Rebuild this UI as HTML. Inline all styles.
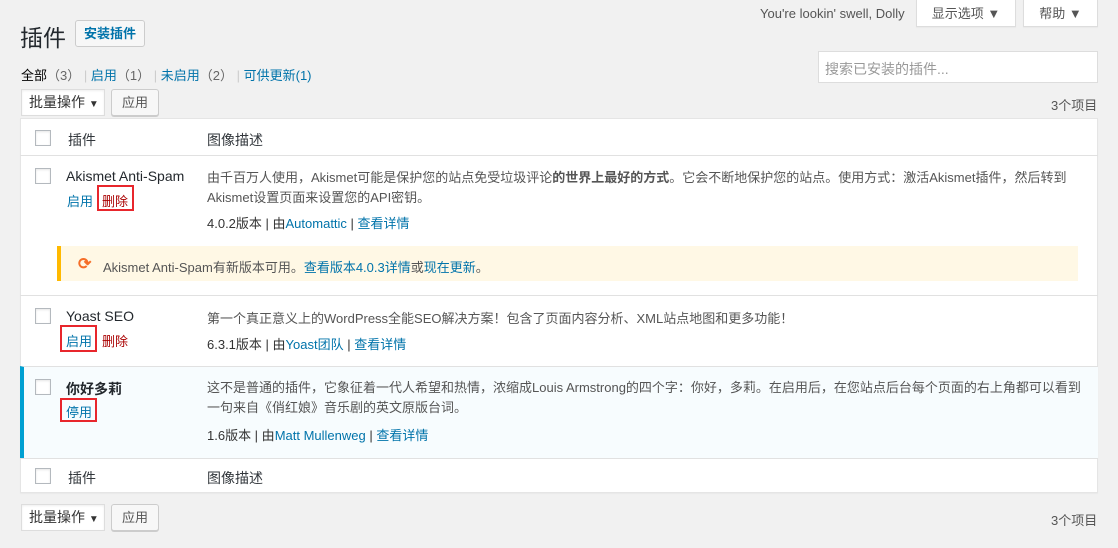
<!DOCTYPE html>
<html><head><meta charset="utf-8"><style>
*{box-sizing:border-box;margin:0;padding:0}
body{width:1118px;height:548px;background:#f1f1f1;font-family:"Liberation Sans","Noto Sans CJK SC",sans-serif;font-size:13px;color:#444;position:relative;overflow:hidden}
.a{position:absolute;white-space:nowrap}
a,.lk{color:#0073aa;text-decoration:none}
.btn{position:absolute;background:#f7f7f7;border:1px solid #ccc;border-radius:3px;box-shadow:0 1px 0 #ccc;color:#555;font-size:13px;text-align:center}
.sel{position:absolute;background:#fff;border:1px solid #ddd;box-shadow:inset 0 1px 2px rgba(0,0,0,.07);color:#333;font-size:14px;padding-left:7px}
.cb{position:absolute;width:16px;height:16px;border:1px solid #b4b9be;background:#fff;box-shadow:inset 0 1px 2px rgba(0,0,0,.1)}
.red{position:absolute;border:2px solid #e8262c}
.tab{position:absolute;background:#fff;border:1px solid #ddd;border-top:none;box-shadow:0 1px 1px rgba(0,0,0,.04);color:#555;font-size:13px;text-align:center}
.line{position:absolute;left:20px;width:1078px;height:1px;background:#e1e1e1}
.d{color:#555}
</style></head><body>
<div class="a" style="left:760px;top:6px;font-size:13px;color:#555">You're lookin' swell, Dolly</div>
<div class="tab" style="left:916px;top:0;width:100px;height:27px;line-height:27px">显示选项 &#9660;</div>
<div class="tab" style="left:1023px;top:0;width:75px;height:27px;line-height:27px">帮助 &#9660;</div>

<div class="a" style="left:20px;top:19px;font-size:23px;color:#23282d">插件</div>
<div class="btn" style="left:75px;top:20px;width:70px;height:27px;line-height:25px;color:#0073aa;font-weight:bold;background:#f7f7f7;box-shadow:none">安装插件</div>

<div class="a" style="left:21px;top:65px;font-size:13px;color:#666"><b style="color:#000;font-weight:normal">全部</b>（3） <span style="color:#ccc">|</span> <a>启用</a>（1） <span style="color:#ccc">|</span> <a>未启用</a>（2） <span style="color:#ccc">|</span> <a>可供更新(1)</a></div>

<div class="a" style="left:818px;top:51px;width:280px;height:32px;background:#fff;border:1px solid #ddd;padding:7px 6px;font-size:14px;color:#999">搜索已安装的插件...</div>

<div class="sel" style="left:21px;top:89px;width:84px;height:27px;line-height:25px">批量操作 <span style="font-size:10px">&#9660;</span></div>
<div class="btn" style="left:111px;top:89px;width:48px;height:27px;line-height:25px">应用</div>
<div class="a" style="left:1051px;top:95px;color:#555">3个项目</div>

<div class="a" style="left:20px;top:118px;width:1078px;height:375px;background:#fff;border:1px solid #e5e5e5;box-shadow:0 1px 1px rgba(0,0,0,.04)"></div>
<div class="line" style="top:155px"></div>
<div class="cb" style="left:35px;top:130px"></div>
<div class="a" style="left:68px;top:130px;font-size:14px;color:#32373c">插件</div>
<div class="a" style="left:207px;top:130px;font-size:14px;color:#32373c">图像描述</div>

<!-- row1 -->
<div class="cb" style="left:35px;top:168px"></div>
<div class="a" style="left:66px;top:168px;font-size:14px;color:#23282d">Akismet Anti-Spam</div>
<div class="a" style="left:67px;top:191px"><a>启用</a></div>
<div class="a" style="left:102px;top:191px;color:#a00">删除</div>
<div class="red" style="left:97px;top:185px;width:37px;height:26px"></div>
<div class="a d" style="left:207px;top:168px;line-height:20px">由千百万人使用，Akismet可能是保护您的站点免受垃圾评论<b>的世界上最好的方式</b>。它会不断地保护您的站点。使用方式：激活Akismet插件，然后转到<br>Akismet设置页面来设置您的API密钥。</div>
<div class="a" style="left:207px;top:213px;color:#333">4.0.2版本 | 由<a>Automattic</a> | <a>查看详情</a></div>
<div class="a" style="left:57px;top:246px;width:1021px;height:35px;background:#fff8e5;border-left:4px solid #ffb900"></div>
<div class="a" style="left:78px;top:254px;color:#f56e28;font-size:16px;font-weight:bold">&#10227;</div>
<div class="a" style="left:103px;top:257px;color:#555">Akismet Anti-Spam有新版本可用。<a>查看版本4.0.3详情</a>或<a>现在更新</a>。</div>
<div class="line" style="top:295px"></div>

<!-- row2 -->
<div class="cb" style="left:35px;top:308px"></div>
<div class="a" style="left:66px;top:308px;font-size:14px;color:#23282d">Yoast SEO</div>
<div class="a" style="left:66px;top:331px"><a>启用</a></div>
<div class="a" style="left:102px;top:331px;color:#a00">删除</div>
<div class="red" style="left:60px;top:325px;width:37px;height:27px"></div>
<div class="a d" style="left:207px;top:308px">第一个真正意义上的WordPress全能SEO解决方案！包含了页面内容分析、XML站点地图和更多功能！</div>
<div class="a" style="left:207px;top:334px;color:#333">6.3.1版本 | 由<a>Yoast团队</a> | <a>查看详情</a></div>

<!-- row3 -->
<div class="a" style="left:20px;top:366px;width:1078px;height:92px;background:#f7fcfe;border-top:1px solid #e1e1e1;border-left:4px solid #00a0d2"></div>
<div class="cb" style="left:35px;top:379px"></div>
<div class="a" style="left:66px;top:379px;font-size:14px;color:#23282d;font-weight:bold">你好多莉</div>
<div class="a" style="left:66px;top:402px"><a>停用</a></div>
<div class="red" style="left:60px;top:398px;width:37px;height:24px"></div>
<div class="a d" style="left:207px;top:378px;line-height:20px">这不是普通的插件，它象征着一代人希望和热情，浓缩成Louis Armstrong的四个字：你好，多莉。在启用后，在您站点后台每个页面的右上角都可以看到<br>一句来自《俏红娘》音乐剧的英文原版台词。</div>
<div class="a" style="left:207px;top:425px;color:#333">1.6版本 | 由<a>Matt Mullenweg</a> | <a>查看详情</a></div>

<div class="line" style="top:458px"></div>
<div class="cb" style="left:35px;top:468px"></div>
<div class="a" style="left:68px;top:468px;font-size:14px;color:#32373c">插件</div>
<div class="a" style="left:207px;top:468px;font-size:14px;color:#32373c">图像描述</div>

<div class="sel" style="left:21px;top:504px;width:84px;height:27px;line-height:25px">批量操作 <span style="font-size:10px">&#9660;</span></div>
<div class="btn" style="left:111px;top:504px;width:48px;height:27px;line-height:25px">应用</div>
<div class="a" style="left:1051px;top:510px;color:#555">3个项目</div>
</body></html>
